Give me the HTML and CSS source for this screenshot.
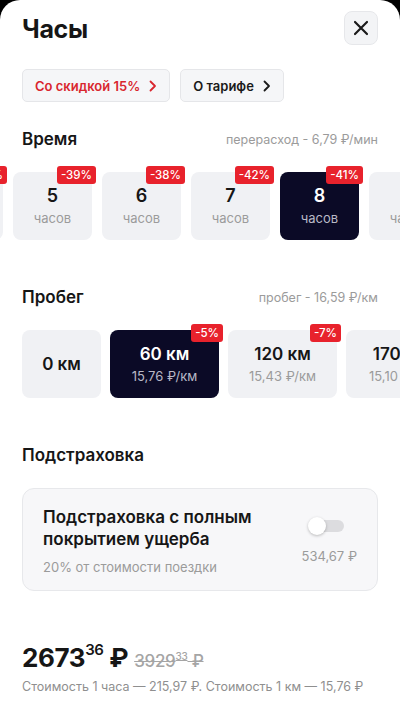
FILE: index.html
```html
<!DOCTYPE html>
<html lang="ru">
<head>
    <meta charset="UTF-8">
    <meta name="viewport" content="width=device-width, initial-scale=1.0">
    <title>Часы</title>
    <link rel="stylesheet" href="styles.css">
</head>
<body>
    <div class="sheet">
        <div class="header">
            <h1>Часы</h1>
            <button class="close" aria-label="Закрыть">
                <svg width="16" height="16" viewBox="0 0 16 16"><path d="M2 2 L14 14 M14 2 L2 14" stroke="#1a1a1a" stroke-width="2.2" stroke-linecap="round"/></svg>
            </button>
        </div>

        <div class="chips">
            <a class="chip chip-red">Со скидкой 15%
                <svg width="8" height="12" viewBox="0 0 8 12"><path d="M1.5 1.5 L6 6 L1.5 10.5" fill="none" stroke="currentColor" stroke-width="1.8" stroke-linecap="round" stroke-linejoin="round"/></svg>
            </a>
            <a class="chip">О тарифе
                <svg width="8" height="12" viewBox="0 0 8 12"><path d="M1.5 1.5 L6 6 L1.5 10.5" fill="none" stroke="currentColor" stroke-width="1.8" stroke-linecap="round" stroke-linejoin="round"/></svg>
            </a>
        </div>

        <div class="section-head">
            <h2>Время</h2>
            <span class="hint">перерасход - 6,79 ₽/мин</span>
        </div>
        <div class="scroller">
            <div class="track track-time">
                <div class="card hour"><span class="badge">-40%</span><b>4</b><small>часа</small></div>
                <div class="card hour"><span class="badge">-39%</span><b>5</b><small>часов</small></div>
                <div class="card hour"><span class="badge">-38%</span><b>6</b><small>часов</small></div>
                <div class="card hour"><span class="badge">-42%</span><b>7</b><small>часов</small></div>
                <div class="card hour active"><span class="badge">-41%</span><b>8</b><small>часов</small></div>
                <div class="card hour"><b>9</b><small>часов</small></div>
            </div>
        </div>

        <div class="section-head section-gap">
            <h2>Пробег</h2>
            <span class="hint">пробег - 16,59 ₽/км</span>
        </div>
        <div class="scroller">
            <div class="track track-km">
                <div class="card km km-zero"><b>0 км</b></div>
                <div class="card km active"><span class="badge">-5%</span><b>60 км</b><small>15,76 ₽/км</small></div>
                <div class="card km"><span class="badge">-7%</span><b>120 км</b><small>15,43 ₽/км</small></div>
                <div class="card km"><b>170 км</b><small>15,10 ₽/км</small></div>
            </div>
        </div>

        <div class="section-head section-gap">
            <h2>Подстраховка</h2>
        </div>
        <div class="insurance">
            <div class="ins-text">
                <div class="ins-title">Подстраховка с полным покрытием ущерба</div>
                <div class="ins-sub">20% от стоимости поездки</div>
            </div>
            <div class="ins-side">
                <span class="toggle"><span class="knob"></span></span>
                <span class="ins-price">534,67 ₽</span>
            </div>
        </div>

        <div class="total">
            <span class="price">2673<sup>36</sup> ₽</span>
            <span class="old">3929<sup>33</sup> ₽</span>
        </div>
        <p class="note">Стоимость 1 часа — 215,97 ₽. Стоимость 1 км — 15,76 ₽</p>
    </div>
</body>
</html>
```

FILE: styles.css
```css
* {
    box-sizing: border-box;
}
body {
    margin: 0;
    background-color: #000;
    font-family: Inter, 'Noto Sans', sans-serif;
    color: #161616;
}
.sheet {
    background-color: #fff;
    border-radius: 20px 20px 0 0;
    min-height: 703px;
    padding: 10px 22px 0 22px;
    overflow: hidden;
}
.header {
    display: flex;
    justify-content: space-between;
    align-items: center;
}
h1 {
    margin: 0;
    font-size: 25px;
    font-weight: 700;
    letter-spacing: -0.3px;
    line-height: 34px;
    padding-top: 2px;
}
.close {
    width: 34px;
    height: 34px;
    border-radius: 8px;
    border: 1px solid #e6e7ea;
    background-color: #f3f4f6;
    display: flex;
    align-items: center;
    justify-content: center;
    padding: 0;
}
.chips {
    display: flex;
    gap: 10px;
    margin-top: 23px;
}
.chip {
    display: flex;
    align-items: center;
    gap: 9px;
    height: 33px;
    padding: 0 12px 0 12px;
    border-radius: 5px;
    border: 1px solid #e5e6e9;
    background-color: #f5f6f8;
    font-size: 13px;
    font-weight: 600;
    color: #1a1a1a;
}
.chip-red {
    color: #d9262e;
}
.section-head {
    display: flex;
    justify-content: space-between;
    align-items: center;
    height: 24px;
    margin-top: 25px;
}
.section-gap {
    margin-top: 45px;
}
h2 {
    margin: 0;
    font-size: 17px;
    font-weight: 600;
}
.hint {
    font-size: 12.5px;
    color: #9b9b9b;
}
.scroller {
    margin: 11px -22px 0 -22px;
    padding-top: 10px;
    overflow: hidden;
}
.track {
    display: flex;
    gap: 10px;
}
.track-time {
    margin-left: -76px;
    gap: 10px;
}
.track-km {
    margin-left: 22px;
    gap: 9px;
}
.card {
    position: relative;
    flex: none;
    height: 68px;
    border-radius: 8px;
    background-color: #f0f1f4;
    display: flex;
    flex-direction: column;
    align-items: center;
    justify-content: center;
}
.card b {
    font-size: 18px;
    font-weight: 600;
    line-height: 22px;
}
.card small {
    font-size: 13px;
    color: #9b9b9b;
    line-height: 18px;
    margin-top: 2px;
}
.hour {
    width: 79px;
}
.km {
    width: 109px;
}
.km b {
    font-size: 17px;
}
.km-zero {
    width: 79px;
}
.card.active {
    background-color: #0b0a26;
    color: #fff;
}
.card.active small {
    color: #b9b9c6;
}
.badge {
    position: absolute;
    top: -6px;
    right: -4px;
    height: 18px;
    padding: 0 4px;
    border-radius: 3px;
    background-color: #e8222c;
    color: #fff;
    font-size: 11.5px;
    line-height: 18px;
    font-weight: 500;
}
.insurance {
    margin-top: 21px;
    height: 103px;
    border-radius: 12px;
    border: 1px solid #e7e8eb;
    background-color: #f7f7f9;
    padding: 17px 20px 0 20px;
    display: flex;
    justify-content: space-between;
}
.ins-title {
    font-size: 17px;
    font-weight: 600;
    line-height: 22px;
    width: 230px;
}
.ins-sub {
    margin-top: 9px;
    font-size: 13px;
    color: #9b9b9b;
}
.ins-side {
    display: flex;
    flex-direction: column;
    align-items: flex-end;
    padding-top: 11px;
}
.toggle {
    position: relative;
    width: 36px;
    height: 18px;
    display: flex;
    align-items: center;
    justify-content: flex-end;
    margin-right: 13px;
}
.toggle::before {
    content: "";
    width: 28px;
    height: 12px;
    border-radius: 6px;
    background-color: #dcdcdf;
}
.knob {
    position: absolute;
    left: 0;
    top: 0;
    width: 18px;
    height: 18px;
    border-radius: 50%;
    background-color: #fff;
    box-shadow: 0 1px 3px rgba(0,0,0,0.25);
}
.ins-price {
    margin-top: 13px;
    font-size: 13px;
    color: #9b9b9b;
}
.total {
    margin-top: 49px;
    display: flex;
    align-items: baseline;
    gap: 6px;
}
.price {
    font-size: 26px;
    font-weight: 700;
    letter-spacing: -0.4px;
}
.price sup {
    font-size: 15px;
    font-weight: 600;
    vertical-align: 12px;
}
.old {
    font-size: 17px;
    font-weight: 500;
    color: #a5a5a5;
    letter-spacing: -0.3px;
    text-decoration: line-through;
}
.old sup {
    font-size: 10px;
    vertical-align: 7px;
}
.note {
    margin: 6px 0 0 0;
    font-size: 12.5px;
    color: #8f8f8f;
}
```
